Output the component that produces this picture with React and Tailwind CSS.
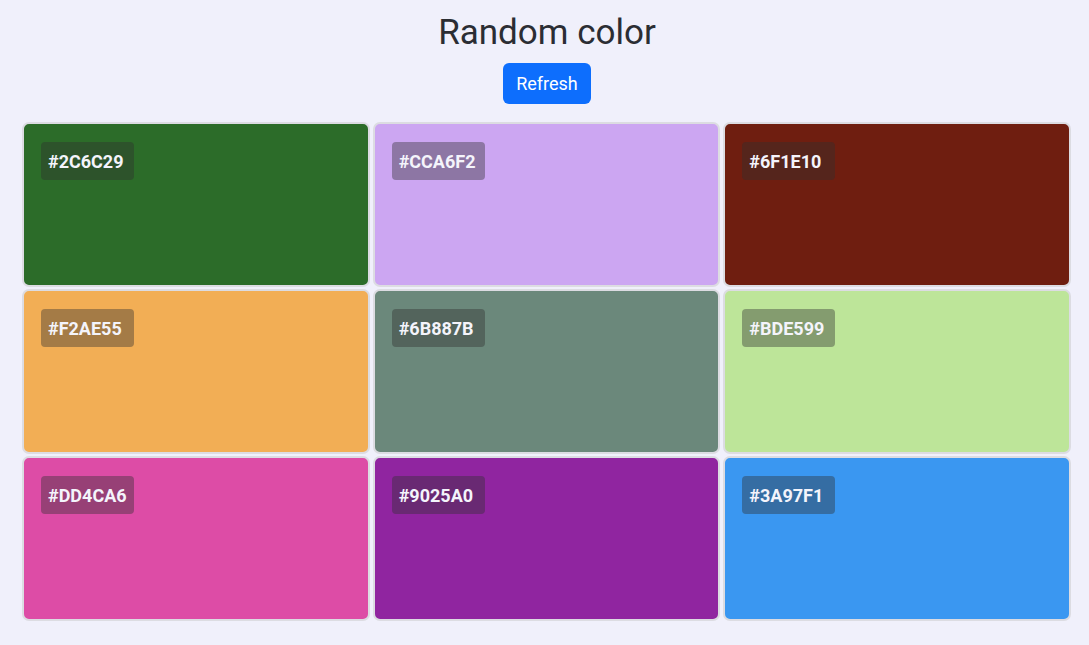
const colors = [
  "#2C6C29",
  "#CCA6F2",
  "#6F1E10",
  "#F2AE55",
  "#6B887B",
  "#BDE599",
  "#DD4CA6",
  "#9025A0",
  "#3A97F1",
];

const ColorCard = ({ hex }) => (
  <div
    className="h-[165px] rounded-[7px] border-2 border-[#dcdce2] px-[17px] pt-[18px]"
    style={{ backgroundColor: hex }}
  >
    <div className="flex h-[38px] w-[93px] items-center rounded-[4px] bg-[rgba(48,48,48,0.4)] pl-[7px] text-[18px] font-bold text-[#f4f4fb]">
      {hex}
    </div>
  </div>
);

export default function App() {
  return (
    <div
      className="min-h-screen bg-[#f0f0fb] pt-[9px] pb-[23px]"
      style={{ fontFamily: "Roboto, 'Liberation Sans', sans-serif" }}
    >
      <h1 className="pl-[5px] text-center text-[35px] leading-[48px] text-[#2b2d33]">
        Random color
      </h1>
      <div className="mt-[6px] flex justify-center pl-[5px]">
        <button className="h-[41px] w-[88px] rounded-[6px] bg-[#0d6efd] text-[18px] text-white">
          Refresh
        </button>
      </div>
      <div className="mt-[18px] ml-[22px] grid w-[1049px] grid-cols-3 gap-x-[3px] gap-y-[2px]">
        {colors.map((c) => (
          <ColorCard key={c} hex={c} />
        ))}
      </div>
    </div>
  );
}
